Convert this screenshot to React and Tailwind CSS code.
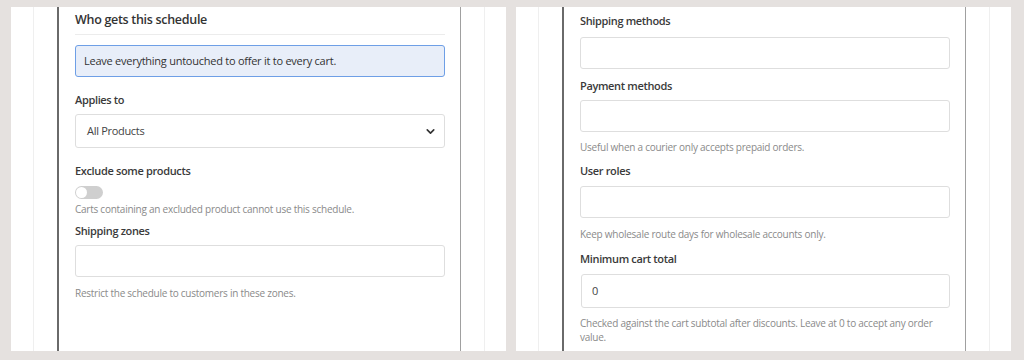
import React from "react";
import { ChevronDown } from "lucide-react";

const font = { fontFamily: '"Open Sans", "Noto Sans", sans-serif' };

function Panel({ children }) {
  return (
    <div className="flex h-[344px] w-[495px] overflow-hidden bg-white">
      <div className="w-[22px] shrink-0" />
      <div className="w-px shrink-0 bg-[#efefef]" />
      <div className="w-[23px] shrink-0" />
      <div className="w-[2px] shrink-0 bg-[#6a6a6a]" />
      <div className="w-[402px] shrink-0 border-r border-[#a0a0a0] pl-4 pr-[15px]">{children}</div>
      <div className="w-[23px] shrink-0" />
      <div className="w-px shrink-0 bg-[#efefef]" />
      <div className="flex-1" />
    </div>
  );
}

function Label({ children, className = "" }) {
  return (
    <div className={"text-[11px] font-semibold leading-4 tracking-[-0.35px] text-[#3a3a3a] " + className}>
      {children}
    </div>
  );
}

function Help({ children, className = "" }) {
  return (
    <div className={"text-[10px] leading-[14px] tracking-[-0.25px] text-[#8a8a8a] " + className}>{children}</div>
  );
}

function Input({ className = "", children }) {
  return (
    <div
      className={
        "flex h-8 items-center rounded-[3px] border border-[#dedede] bg-white px-[10px] text-[11px] tracking-[-0.3px] text-[#444] " +
        className
      }
    >
      {children}
    </div>
  );
}

export default function App() {
  return (
    <div style={font} className="flex h-[360px] w-[1024px] gap-[10px] bg-[#e5e1df] pl-[11px] pt-[7px]">
      <Panel>
        <div className="pt-[4px]">
          <div className="border-b border-[#ececec] pb-[5px] text-[12.5px] font-semibold leading-[18px] tracking-[-0.3px] text-[#333]">
            Who gets this schedule
          </div>
          <div className="mt-[10px] flex h-8 items-center rounded-[3px] border border-[#6e9fe6] bg-[#e8eef9] px-2 text-[11px] tracking-[-0.25px] text-[#333]">
            Leave everything untouched to offer it to every cart.
          </div>
          <Label className="mt-[15px]">Applies to</Label>
          <div className="mt-[6px] flex h-[34px] items-center justify-between rounded-[3px] border border-[#dedede] bg-white pl-[11px] pr-[7px] text-[11px] tracking-[-0.3px] text-[#444]">
            <span>All Products</span>
            <ChevronDown size={13} strokeWidth={3} className="text-[#333]" />
          </div>
          <Label className="mt-[15px]">Exclude some products</Label>
          <div className="mt-[7px] flex h-[13px] w-[28px] items-center rounded-full bg-[#cfcfcf] px-[1px]">
            <div className="h-[11px] w-[11px] rounded-full bg-white" />
          </div>
          <Help className="mt-[3px]">Carts containing an excluded product cannot use this schedule.</Help>
          <Label className="mt-[7px]">Shipping zones</Label>
          <Input className="mt-[6px]" />
          <Help className="mt-[9px]">Restrict the schedule to customers in these zones.</Help>
        </div>
      </Panel>
      <Panel>
        <div className="pt-[6px]">
          <Label>Shipping methods</Label>
          <Input className="mt-[8px]" />
          <Label className="mt-[9px]">Payment methods</Label>
          <Input className="mt-[6px]" />
          <Help className="mt-[8px]">Useful when a courier only accepts prepaid orders.</Help>
          <Label className="mt-[9px]">User roles</Label>
          <Input className="mt-[7px]" />
          <Help className="mt-[9px]">Keep wholesale route days for wholesale accounts only.</Help>
          <Label className="mt-[10px]">Minimum cart total</Label>
          <Input className="ml-px mt-[7px] h-[34px]">0</Input>
          <Help className="mt-[8px] pr-[10px]">
            Checked against the cart subtotal after discounts. Leave at 0 to accept any order value.
          </Help>
        </div>
      </Panel>
    </div>
  );
}
